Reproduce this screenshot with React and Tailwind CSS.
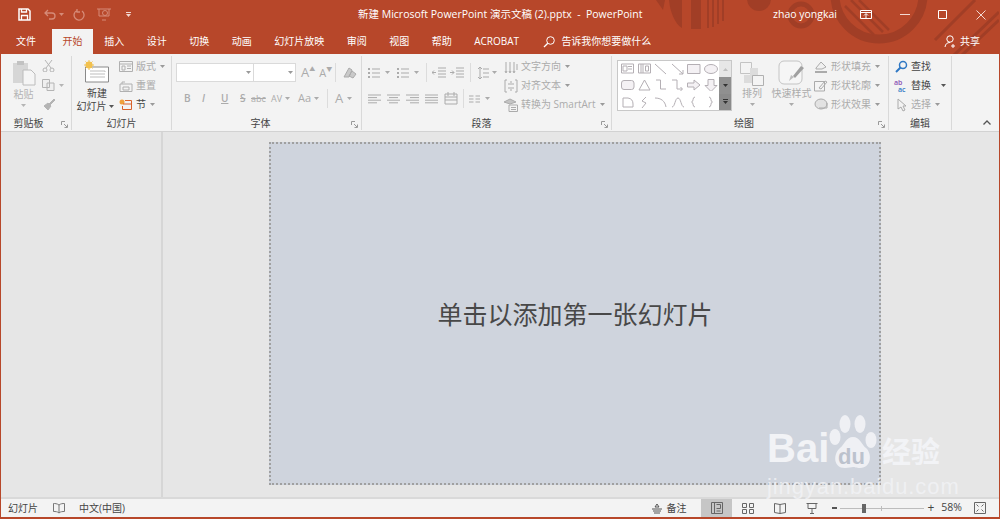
import React from "react";

const FONT = { fontFamily: '"Open Sans","Noto Sans CJK SC",sans-serif' };

function Ic({ w = 14, h = 14, vb, className = "", children }) {
  return (
    <svg width={w} height={h} viewBox={vb || `0 0 ${w} ${h}`} fill="none" stroke="currentColor" strokeWidth="1" className={`shrink-0 ${className}`}>
      {children}
    </svg>
  );
}

function Chev({ className = "" }) {
  return (
    <svg width="5" height="3" viewBox="0 0 5 3" className={`shrink-0 ${className}`}>
      <path d="M0 0h5L2.5 3z" fill="currentColor" />
    </svg>
  );
}

function Launcher() {
  return (
    <Ic w={7} h={7} className="text-[#9a9a9a]">
      <path d="M.5 4V.5H4M3 3l3 3M6.5 3.5v3h-3" />
    </Ic>
  );
}

function Group({ label, width, launcher, labelPad = "", children }) {
  return (
    <div className="mb-[1px] flex shrink-0 flex-col border-r border-[#d9d9d9]" style={{ width }}>
      <div className="relative h-[60px] w-full shrink-0">{children}</div>
      <div className={`relative flex h-[14px] shrink-0 items-center justify-center text-[10px] text-[#444] ${labelPad}`}>
        {label}
        {launcher && (
          <span className="absolute right-[3px] top-[5px] flex">
            <Launcher />
          </span>
        )}
      </div>
    </div>
  );
}

function SmallRow({ icon, text, chev, chevClass = "ml-[1px]", dim = true, className = "" }) {
  return (
    <div className={`flex h-[19px] items-center gap-[3px] text-[10px] ${dim ? "text-[#ababab]" : "text-[#444]"} ${className}`}>
      {icon}
      <span className="whitespace-nowrap">{text}</span>
      {chev && <Chev className={`text-[#9a9a9a] ${chevClass}`} />}
    </div>
  );
}

function AlignIcon({ lines }) {
  return (
    <Ic w={14} h={10}>
      {lines.map(([a, b], i) => (
        <path key={i} d={`M${a} ${1 + i * 2.6}H${b}`} />
      ))}
    </Ic>
  );
}

function Clipboard() {
  return (
    <div className="flex h-full pl-[9px] pt-[3px] text-[#b4b4b4]">
      <div className="flex w-[27px] flex-col items-center">
        <svg width="24" height="27" viewBox="0 0 24 27" className="shrink-0">
          <path d="M1 4h15v20H1z" fill="#d6d6d6" />
          <path d="M5 2h7v4H5z" fill="#c2c2c2" />
          <path d="M11 11h8l4 4v11H11z" fill="#f5f5f5" stroke="#bcbcbc" />
        </svg>
        <span className="mt-[1px] text-[10px] leading-[14px]">粘贴</span>
        <Chev className="mt-[3px] text-[#b5b5b5]" />
      </div>
      <div className="ml-[5px] flex flex-col gap-[7px] pt-[1px]">
        <Ic w={13} h={12}>
          <path d="M3 0l6 8M10 0L4 8" />
          <circle cx="3" cy="10" r="2" />
          <circle cx="10" cy="10" r="2" />
        </Ic>
        <div className="flex items-center gap-[4px]">
          <Ic w={13} h={12}>
            <path d="M.5.5h7v8h-7zM5 4h7v7.5H5z" fill="#efefef" />
          </Ic>
          <Chev className="text-[#b5b5b5]" />
        </div>
        <Ic w={13} h={12}>
          <path d="M7 6l5-5 1 1-5 5z" fill="currentColor" />
          <path d="M2 8l4-3 3 3-3 4z" fill="currentColor" />
        </Ic>
      </div>
    </div>
  );
}

function Slides() {
  return (
    <div className="flex h-full text-[#444]">
      <div className="flex w-[45px] flex-col items-center pl-[5px] pt-[4px]">
        <svg width="26" height="23" viewBox="0 0 26 23" className="shrink-0">
          <path d="M1.5 7h23v15h-23z" fill="#fff" stroke="#8a8a8a" />
          <path d="M6 11h15v1M6 14h15M6 17h15" stroke="#bdbdbd" fill="none" />
          <circle cx="5" cy="5" r="3.5" fill="#f2c14e" />
          <path d="M5 0v10M0 5h10M1.5 1.5l7 7M8.5 1.5l-7 7" stroke="#f2c14e" />
        </svg>
        <span className="mt-[4px] text-[10px] leading-[13px]">新建</span>
        <span className="-ml-[4px] flex items-center gap-[2px] whitespace-nowrap text-[10px] leading-[13px]">
          幻灯片
          <Chev className="text-[#555]" />
        </span>
      </div>
      <div className="ml-[2px] pt-px">
        <SmallRow
          text="版式"
          chev
          icon={
            <Ic w={14} h={11} className="text-[#b0b0b0]">
              <path d="M.5.5h13v10H.5zM.5 3h13M3 5h3v4H3zM8 5h4M8 7.5h4" />
            </Ic>
          }
        />
        <SmallRow
          text="重置"
          icon={
            <Ic w={14} h={12} className="text-[#b0b0b0]">
              <path d="M1 4h12v7.5H1zM3 4V2h3M4 7h6v3H4z" />
            </Ic>
          }
        />
        <SmallRow
          text="节"
          dim={false}
          chev
          icon={
            <Ic w={14} h={12} className="text-[#666]">
              <circle cx="3" cy="3" r="2.5" fill="#f0a13c" stroke="none" />
              <path d="M6 1.5h6.5v9H3.5V7M4 5h8.5" stroke="#d9622b" />
            </Ic>
          }
        />
      </div>
    </div>
  );
}

function Font() {
  return (
    <div className="flex h-full flex-col pl-[4px] pt-[7px] text-[#ababab]">
      <div className="flex h-[19px] items-center">
        <div className="flex h-[19px] w-[78px] items-center justify-end border border-[#dadada] bg-white pr-[2px]">
          <Chev className="text-[#9a9a9a]" />
        </div>
        <div className="flex h-[19px] w-[42px] items-center justify-end border border-l-0 border-[#dadada] bg-white pr-[2px]">
          <Chev className="text-[#9a9a9a]" />
        </div>
        <span className="ml-[5px] text-[13px] leading-none">A</span>
        <span className="mb-[8px] text-[6px] leading-none">▲</span>
        <span className="ml-[4px] text-[11px] leading-none">A</span>
        <span className="mb-[8px] text-[6px] leading-none">▼</span>
        <span className="ml-[3px] h-[19px] w-px bg-[#dcdcdc]" />
        <Ic w={14} h={14} className="ml-[7px]">
          <path d="M1 11L6 2l3 2-3 7zM9 5l4 3-3 4-4-2z" fill="#c9c9c9" />
        </Ic>
      </div>
      <div className="mt-[7px] flex h-[19px] items-center text-[10px] font-semibold">
        <span className="ml-[8px] w-[18px]">B</span>
        <span className="w-[19px] italic">I</span>
        <span className="w-[19px] underline">U</span>
        <span className="w-[11px] line-through">S</span>
        <span className="w-[20px] pt-px text-[9px] font-normal line-through">abc</span>
        <span className="flex w-[27px] items-center gap-[3px] text-[9px] font-normal">
          AV
          <Chev />
        </span>
        <span className="flex w-[29px] items-center gap-[3px] text-[11px] font-normal">
          Aa
          <Chev />
        </span>
        <span className="h-[19px] w-px bg-[#dcdcdc]" />
        <span className="ml-[7px] flex items-center gap-[4px] text-[13px] font-normal">
          A
          <Chev />
        </span>
      </div>
    </div>
  );
}

function Paragraph() {
  return (
    <div className="flex h-full text-[#ababab]">
      <div className="flex w-[136px] shrink-0 flex-col pl-[6px] pt-[7px]">
        <div className="flex h-[19px] items-center">
          <Ic w={13} h={12}>
            <path d="M0 2h2M0 6h2M0 10h2" strokeWidth="2" />
            <path d="M4 2h8M4 6h8M4 10h8" />
          </Ic>
          <Chev className="ml-[4px]" />
          <Ic w={13} h={12} className="ml-[7px]">
            <path d="M0 2h2M0 6h2M0 10h2" strokeWidth="2" />
            <path d="M4 2h8M4 6h8M4 10h8" />
          </Ic>
          <Chev className="ml-[4px]" />
          <span className="ml-[7px] h-[19px] w-px bg-[#dcdcdc]" />
          <Ic w={14} h={12} className="ml-[5px]">
            <path d="M6 1h8M6 4h8M6 7h8M6 10h8M4 5.5H0M2 3.5l-2 2 2 2" />
          </Ic>
          <Ic w={14} h={12} className="ml-[4px]">
            <path d="M6 1h8M6 4h8M6 7h8M6 10h8M0 5.5h4M2 3.5l2 2-2 2" />
          </Ic>
          <span className="ml-[6px] h-[19px] w-px bg-[#dcdcdc]" />
          <Ic w={12} h={14} className="ml-[6px]">
            <path d="M3 1v12M1 3l2-2 2 2M1 11l2 2 2-2M6 3h6M6 7h6M6 11h6" />
          </Ic>
          <Chev className="ml-[3px]" />
        </div>
        <div className="mt-[7px] flex h-[19px] items-center gap-[5px]">
          <AlignIcon lines={[[0, 13], [0, 9], [0, 13], [0, 9]]} />
          <AlignIcon lines={[[0, 13], [2, 11], [0, 13], [2, 11]]} />
          <AlignIcon lines={[[0, 13], [4, 13], [0, 13], [4, 13]]} />
          <AlignIcon lines={[[0, 13], [0, 13], [0, 13], [0, 13]]} />
          <Ic w={14} h={13}>
            <path d="M1 2h12v10H1zM1 5h12M1 8h12M4 0v4M10 0v4" />
          </Ic>
          <span className="h-[19px] w-px bg-[#dcdcdc]" />
          <Ic w={11} h={10}>
            <path d="M0 2h4.5M0 5h4.5M0 8h4.5M6.5 2H11M6.5 5H11M6.5 8H11" />
          </Ic>
          <Chev />
        </div>
      </div>
      <div className="pl-[6px] pt-px">
        <SmallRow
          text="文字方向"
          chev
          icon={
            <Ic w={14} h={14}>
              <path d="M2 2v10M6 2v10M10 2v10M13 4v6M1 11l1 2 1-2M5 11l1 2 1-2M9 11l1 2 1-2" />
            </Ic>
          }
        />
        <SmallRow
          text="对齐文本"
          chev
          icon={
            <Ic w={14} h={14}>
              <path d="M3 1H1v12h2M11 1h2v12h-2M4 5h6M4 9h6M7 2v2M7 10v2" />
            </Ic>
          }
        />
        <SmallRow
          text="转换为 SmartArt"
          chev
          icon={
            <Ic w={14} h={14}>
              <path d="M0 4l6-3 6 3-6 2z" fill="#c4c4c4" />
              <path d="M5 7h8.5v6.5H5zM7 9.5h5M7 11.5h5" />
            </Ic>
          }
        />
      </div>
    </div>
  );
}

const SHAPES = [
  <path d="M.5 1h12v9H.5zM2 3h4v5H2zM7 3.5h4M7 6h4" />,
  <path d="M.5 1h12v9H.5zM3 1v9M5 1v9M7.5 3h3v5h-3z" />,
  <path d="M1 1l11 10" />,
  <path d="M1 1l11 10M12 7v4H8" />,
  <path d="M.5 1.5h12.5v9H.5z" fill="#f4f1f4" />,
  <ellipse cx="7" cy="6" rx="6.5" ry="4.5" fill="#f4f1f4" />,
  <rect x=".5" y="1.5" width="12.5" height="9" rx="2.5" fill="#f4f1f4" />,
  <path d="M6.5 1L12 11H1z" fill="#fff" />,
  <path d="M2 1h4.5v9H12" />,
  <path d="M1 1h5v9h5M9.5 8l2 2-2 2" />,
  <path d="M.5 4H7V1l6 5-6 5V8H.5z" fill="#f4f1f4" />,
  <path d="M4 .5h6v6h3l-6 6-6-6h3z" fill="#f4f1f4" />,
  <path d="M2 2h5a6 6 0 0 1 5 6v3H2z" fill="#fff" />,
  <path d="M8 1L4 5l4 2-4 5" />,
  <path d="M1 2c6 0 10 3 11 9" />,
  <path d="M1 11C4 11 4 2 7 2s3 9 6 9" />,
  <path d="M8 1C5 1 7 6 4.500 6 7 6 5 11 8 11" />,
  <path d="M5 1c3 0 1 5 3.500 5C6 6 8 11 5 11" />,
];

function Drawing() {
  return (
    <div className="flex h-full text-[#ababab]">
      <div className="ml-[5px] mt-[4px] flex h-[51px] w-[115px] shrink-0 border border-[#c8c8c8] bg-white">
        <div className="grid h-full flex-1 grid-cols-6 grid-rows-3 pl-[2px] text-[#b4afb4]">
          {SHAPES.map((s, i) => (
            <div key={i} className="flex items-center justify-center">
              <Ic w={14} h={12}>
                {s}
              </Ic>
            </div>
          ))}
        </div>
        <div className="flex w-[12px] flex-col">
          <div className="flex flex-1 items-center justify-center bg-[#e7e7e7] text-[#c0c0c0]">
            <Chev className="rotate-180" />
          </div>
          <div className="flex flex-1 items-center justify-center bg-[#909090] text-[#333]">
            <Chev />
          </div>
          <div className="flex flex-1 flex-col items-center justify-center gap-px bg-[#8b8b8b] text-[#333]">
            <span className="h-px w-[5px] bg-[#333]" />
            <Chev />
          </div>
        </div>
      </div>
      <div className="ml-[6px] flex w-[28px] shrink-0 flex-col items-center pt-[6px]">
        <svg width="24" height="24" viewBox="0 0 24 24" className="shrink-0">
          <path d="M.5.5h11v11H.5z" fill="#f4f4f4" stroke="#c4c4c4" />
          <path d="M10 6h8v8h-8zM4 13h9v8H4z" fill="#dcdcdc" />
          <path d="M12.500 13.500h11v10h-11z" fill="#f4f4f4" stroke="#b0b0b0" />
        </svg>
        <span className="mt-[1px] text-[10px] leading-[13px]">排列</span>
        <Chev className="mt-[3px]" />
      </div>
      <div className="ml-[4px] flex w-[43px] shrink-0 flex-col items-center pt-[4px]">
        <svg width="27" height="26" viewBox="0 0 27 26" className="shrink-0">
          <rect x="1" y="1" width="23" height="23" rx="5" fill="#f6f6f6" stroke="#c4c4c4" />
          <path d="M26 8L17 18l-2-2 8-10z" fill="#a0a0a0" />
          <path d="M16 17l-5 4 2-6z" fill="#bdbdbd" />
        </svg>
        <span className="mt-[1px] whitespace-nowrap text-[10px] leading-[13px]">快速样式</span>
        <Chev className="mt-[3px]" />
      </div>
      <div className="ml-[1px] pt-px">
        <SmallRow
          text="形状填充"
          chev
          icon={
            <Ic w={14} h={13}>
              <path d="M2 8l5-6 5 5-4 2H2z" fill="#f0f0f0" />
              <path d="M1 12h12" strokeWidth="2" />
            </Ic>
          }
        />
        <SmallRow
          text="形状轮廓"
          chev
          icon={
            <Ic w={14} h={13}>
              <path d="M.5 2.500h10v9.500H.5zM5 9l6-7 2 1-6 7z" fill="#f4f4f4" />
            </Ic>
          }
        />
        <SmallRow
          text="形状效果"
          chev
          icon={
            <Ic w={14} h={13}>
              <path d="M1 6a6 5 0 0 1 12 0 6 5 0 0 1-12 0z" fill="#e2e2e2" />
              <path d="M5 10h8V5" />
            </Ic>
          }
        />
      </div>
    </div>
  );
}

function Editing() {
  return (
    <div className="h-full pl-[6px] pt-px">
      <SmallRow
        dim={false}
        text="查找"
        icon={
          <Ic w={13} h={13} className="text-[#2f78c4]">
            <circle cx="8" cy="5" r="3.500" strokeWidth="1.500" />
            <path d="M5.500 7.500L1 12" strokeWidth="2" />
          </Ic>
        }
      />
      <SmallRow
        dim={false}
        text="替换"
        className="-ml-[1px]"
        chev
        chevClass="ml-[7px] text-[#555]"
        icon={
          <span className="flex w-[14px] flex-col text-[7px] font-semibold leading-[7px]">
            <span className="text-[#8a4fb3]">ab</span>
            <span className="pl-[4px] text-[#2f78c4]">ac</span>
          </span>
        }
      />
      <SmallRow
        text="选择"
        chev
        icon={
          <Ic w={13} h={14}>
            <path d="M3 1v10l3-2 2 4 2-1-2-4h3z" />
          </Ic>
        }
      />
    </div>
  );
}

function Pattern() {
  return (
    <svg width="380" height="54" viewBox="620 0 380 54" className="absolute right-0 top-0" fill="none" stroke="#a13e26">
      <path d="M657 0l7 10 2-10z" fill="#a13e26" stroke="none" />
      <path d="M670 0h13v28c-7-4-12-16-13-28z" fill="#a13e26" stroke="none" />
      <path d="M692 0h10v29h-10z" fill="#a13e26" stroke="none" />
      <path d="M709 0v28M714 0v27M719 0v24M724 0v21" strokeWidth="2" />
      <circle cx="760" cy="-1" r="12" fill="#a13e26" stroke="none" />
      <circle cx="802" cy="15" r="11" strokeWidth="5" />
      <circle cx="880" cy="-5" r="44" strokeWidth="9" />
      <path d="M846 6l29 29M852 0l32 32M860 0l30 30" strokeWidth="2.500" />
      <path d="M1000 12l-46 44M1000 20l-38 36M976 0l-40 40" strokeWidth="3" />
    </svg>
  );
}

function Watermark() {
  return (
    <div className="pointer-events-none absolute right-[55px] top-[411px] w-[177px] text-[#f2f3f6]" style={{ fontFamily: '"Liberation Sans","Noto Sans CJK SC",sans-serif' }}>
      <div className="relative flex h-[60px] items-end">
        <span className="w-[62px] text-[40px] font-bold leading-[46px]">Bai</span>
        <svg width="48" height="58" viewBox="0 0 48 58" className="shrink-0">
          <g fill="#eff0f4">
            <ellipse cx="16" cy="11" rx="5.500" ry="9" />
            <ellipse cx="31" cy="11" rx="5.500" ry="9" />
            <ellipse cx="6" cy="24" rx="5.500" ry="8" />
            <ellipse cx="42" cy="27" rx="5.500" ry="8" />
            <path d="M24 24c7 0 8 7 13 11 6 5 6 20-6 20-4 0-5-1-7-1s-4 1-8 1C4 55 4 41 11 35c5-4 6-11 13-11z" />
          </g>
        </svg>
        <span className="absolute left-[71px] top-[35px] text-[22px] font-bold leading-[22px] text-[#bcc2cd]">du</span>
        <span className="ml-[5px] whitespace-nowrap pb-[1px] text-[29px] font-bold leading-[34px]">经验</span>
      </div>
      <div className="mt-[4px] whitespace-nowrap text-[22px] leading-[24px] tracking-[0.9px] opacity-80">jingyan.baidu.com</div>
    </div>
  );
}

export default function App() {
  return (
    <div className="relative flex h-[519px] w-[1000px] flex-col overflow-hidden border-x border-b-2 border-[#b7472a] bg-[#e6e6e6]" style={FONT}>
      <div className="relative h-[54px] shrink-0 bg-[#b7472a] text-white">
        <Pattern />
        <div className="relative flex h-[29px] items-center">
          <div className="flex items-center pl-[17px]">
            <Ic w={13} h={13} vb="0 0 13 13" className="text-white">
              <path d="M1 1h9l2 2v9H1z" strokeWidth="1.500" />
              <path d="M3.500 1v3h5V1M3.500 12V7.500h6V12" strokeWidth="1.300" />
            </Ic>
            <Ic w={12} h={11} className="ml-[13px] text-[#d68b78]">
              <path d="M4 1L1 4l3 3M1 4h7a3 3 0 0 1 0 6H5" strokeWidth="1.300" />
            </Ic>
            <Chev className="ml-[3px] text-[#d68b78]" />
            <Ic w={12} h={12} className="ml-[9px] text-[#d68b78]">
              <path d="M9 2a5 5 0 1 1-5-.500M4 0v3h3" strokeWidth="1.300" />
            </Ic>
            <Ic w={14} h={13} className="ml-[12px] text-[#d68b78]">
              <path d="M0 1h14M2 1v7h10V1M5 12h4" />
              <circle cx="8" cy="5" r="2.500" />
            </Ic>
            <span className="ml-[15px] flex flex-col items-center gap-[1px] text-[#f3d9d2]">
              <span className="h-px w-[5px] bg-current" />
              <Chev />
            </span>
          </div>
          <div className="absolute left-[357px] top-[7px] whitespace-nowrap text-[10.5px] leading-[14px]">
            新建 Microsoft PowerPoint 演示文稿 (2).pptx&nbsp; -&nbsp; PowerPoint
          </div>
          <div className="ml-auto flex items-center">
            <span className="whitespace-nowrap text-[10.500px]">zhao yongkai</span>
            <Ic w={12} h={10} className="ml-[23px] text-white">
              <path d="M.5.500h11v8H.5zM.5 2.500h11M6 8V4M4 5.500l2-2 2 2" />
            </Ic>
            <span className="ml-[28px] h-px w-[10px] bg-[#f3d9d2]" />
            <Ic w={9} h={9} className="ml-[28px] text-white">
              <path d="M.5.500h8v8h-8z" />
            </Ic>
            <Ic w={10} h={10} className="ml-[29px] mr-[13px] text-[#f3d9d2]">
              <path d="M.5.500l9 9M9.500.500l-9 9" />
            </Ic>
          </div>
        </div>
        <div className="relative flex h-[25px] items-stretch text-[10px]">
          <span className="flex items-center pl-[15px] pr-[11px]">文件</span>
          <span className="ml-[5px] flex items-center bg-[#f3f3f3] px-[10.500px] text-[#b7472a]">开始</span>
          {["插入", "设计", "切换", "动画", "幻灯片放映", "审阅", "视图", "帮助", "ACROBAT"].map((t) => (
            <span key={t} className="flex items-center whitespace-nowrap px-[11.250px]">
              {t}
            </span>
          ))}
          <span className="ml-[13px] flex items-center gap-[6px] whitespace-nowrap">
            <Ic w={12} h={12} className="text-white">
              <circle cx="7.500" cy="4.500" r="3.800" />
              <path d="M4.800 7.200L1 11" strokeWidth="1.300" />
            </Ic>
            告诉我你想要做什么
          </span>
          <span className="ml-auto mr-[19px] flex items-center gap-[3px]">
            <Ic w={13} h={13} className="text-white">
              <circle cx="6" cy="4" r="3.200" />
              <path d="M1 12c.5-3 2-4.500 5-4.500M9 9v4M7 11h4" />
            </Ic>
            共享
          </span>
        </div>
      </div>

      <div className="relative flex h-[78px] shrink-0 items-stretch border-b border-[#d2d2d2] bg-[#f3f3f3] pt-[2px]">
        <Group label="剪贴板" width={71} launcher labelPad="pr-[15px]">
          <Clipboard />
        </Group>
        <Group label="幻灯片" width={100}>
          <Slides />
        </Group>
        <Group label="字体" width={190} launcher labelPad="pr-[12px]">
          <Font />
        </Group>
        <Group label="段落" width={250} launcher labelPad="pr-[10px]">
          <Paragraph />
        </Group>
        <Group label="绘图" width={277} launcher labelPad="pr-[12px]">
          <Drawing />
        </Group>
        <Group label="编辑" width={63}>
          <Editing />
        </Group>
        <Ic w={8} h={5} className="absolute bottom-[6px] right-[8px] text-[#555]">
          <path d="M.5 4.500L4 1l3.500 3.500" strokeWidth="1.300" />
        </Ic>
      </div>

      <div className="flex min-h-0 flex-1 border-b-2 border-[#d9d9d9]">
        <div className="w-[162px] shrink-0 border-r-2 border-[#d6d6d6]" />
        <div className="flex flex-1 pb-[12px] pl-[106px] pt-[10px]">
          <div className="flex h-[343px] w-[612px] items-center justify-center border-2 border-dotted border-[#a0a0a0] bg-[#cfd4dd] text-[25px] leading-none text-[#484848]" style={{ fontFamily: '"Noto Sans CJK SC",sans-serif' }}>
            单击以添加第一张幻灯片
          </div>
        </div>
      </div>

      <div className="flex h-[18px] shrink-0 items-center bg-[#f3f3f3] text-[10px] text-[#444]">
        <span className="ml-[7px]">幻灯片</span>
        <Ic w={12} h={11} className="ml-[15px] text-[#777]">
          <path d="M6 2C4 .500 2 .500.500.500v8c2 0 4 0 5.500 1.500 1.500-1.500 3.500-1.500 5.500-1.500v-8C9.500.500 8 .500 6 2zM6 2v8" />
        </Ic>
        <span className="ml-[14px]">中文(中国)</span>
        <span className="ml-auto flex items-center gap-[3px]">
          <Ic w={12} h={11} className="text-[#555]">
            <path d="M6 1l-2 3h4zM1 6h10M2 8h8M3 10h6" />
          </Ic>
          备注
        </span>
        <span className="ml-[15px] flex h-[18px] w-[31px] items-center justify-center bg-[#c6c6c6]">
          <Ic w={12} h={12} className="text-[#666]">
            <path d="M.5.500h11v11H.5zM3.500.500v11M5.500 2.500h4v4h-4M5.500 9h4" />
          </Ic>
        </span>
        <span className="flex w-[32px] justify-center">
          <Ic w={12} h={11} className="text-[#666]">
            <path d="M.5.500h4v4h-4zM7.500.500h4v4h-4zM.5 6.500h4v4h-4zM7.500 6.500h4v4h-4z" />
          </Ic>
        </span>
        <span className="flex w-[32px] justify-center">
          <Ic w={12} h={11} className="text-[#666]">
            <path d="M6 1.500L.5.500v9l5.500 1 5.500-1v-9zM6 1.500v9" />
          </Ic>
        </span>
        <span className="flex w-[32px] justify-center">
          <Ic w={12} h={11} className="text-[#666]">
            <path d="M.5.500h11M2 .500v5h8v-5M6 5.500V10M4 10.500h4" />
          </Ic>
        </span>
        <span className="ml-[4px] h-[2px] w-[5px] bg-[#555]" />
        <span className="relative ml-[3px] h-px w-[84px] bg-[#bdbdbd]">
          <span className="absolute left-[22px] top-[-4px] h-[9px] w-[4px] bg-[#666]" />
          <span className="absolute left-[41px] top-[-2px] h-[5px] w-px bg-[#bdbdbd]" />
        </span>
        <span className="ml-[3px] text-[12px] leading-none">+</span>
        <span className="ml-[7px] text-[10.500px]">58%</span>
        <Ic w={12} h={12} className="ml-[12px] mr-[13px] text-[#666]">
          <path d="M.5.500h11v11H.5zM2.500 2.500l2 2M9.500 2.500l-2 2M2.500 9.500l2-2M9.500 9.500l-2-2" />
        </Ic>
      </div>

      <Watermark />
    </div>
  );
}
